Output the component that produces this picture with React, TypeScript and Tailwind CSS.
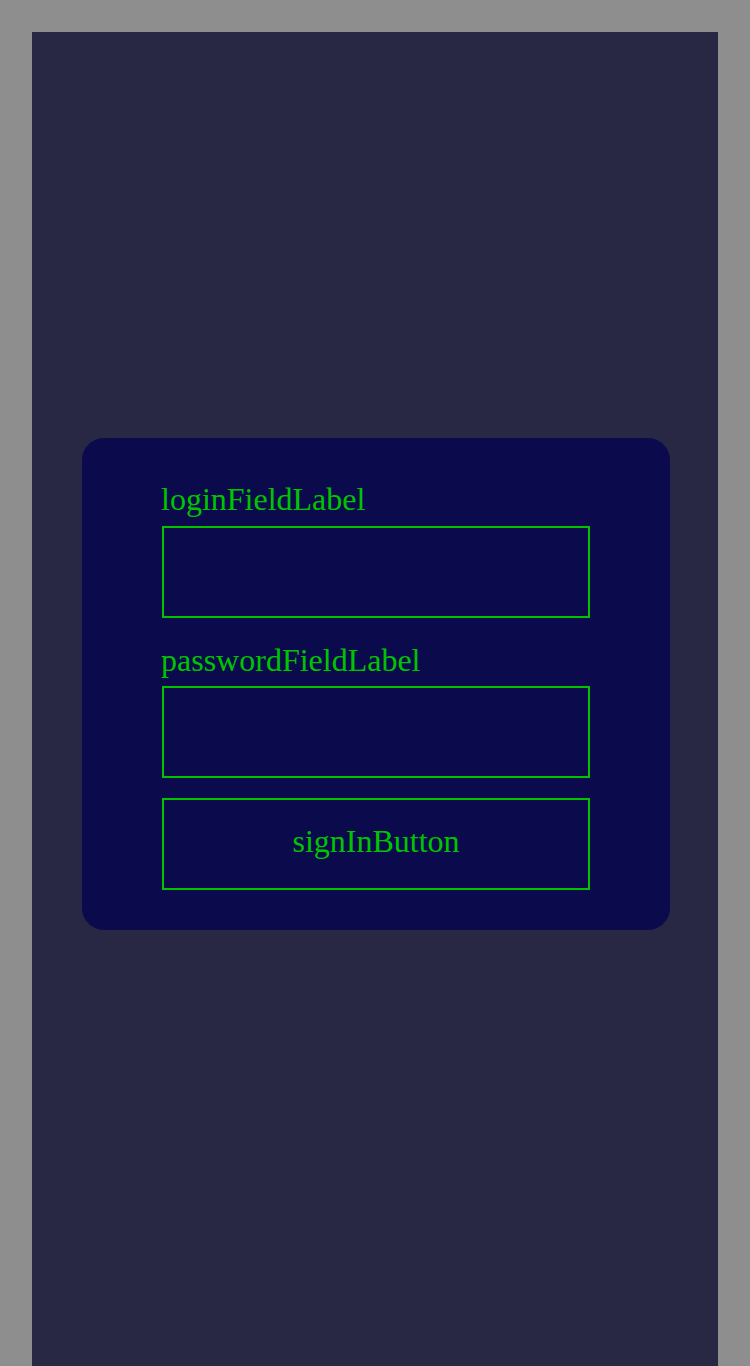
export default function App() {
  return (
    <div className="min-h-screen bg-[#8e8e8e] px-8 pt-8">
      <div className="min-h-[1334px] bg-[#282844] pt-[406px] pr-[48px] pl-[50px]">
        <form
          onSubmit={e => e.preventDefault()}
          className="flex flex-col rounded-[22px] bg-[#0a0a4c] px-20 pt-[43px] pb-10 font-['Liberation_Serif',serif] text-[32px] text-[#00c400]"
        >
          <label className="mb-[9px] -ml-px block leading-[36px]">loginFieldLabel</label>
          <input type="text" className="h-[92px] w-full border-2 border-[#00c400] bg-transparent px-3 outline-none" />

          <label className="mt-6 mb-2 -ml-px block leading-[36px]">passwordFieldLabel</label>
          <input type="password" className="h-[92px] w-full border-2 border-[#00c400] bg-transparent px-3 outline-none" />

          <button type="submit" className="mt-5 flex h-[92px] w-full items-center justify-center border-2 border-[#00c400] pb-[6px] leading-[36px]">
            signInButton
          </button>
        </form>
      </div>
    </div>
  );
}
